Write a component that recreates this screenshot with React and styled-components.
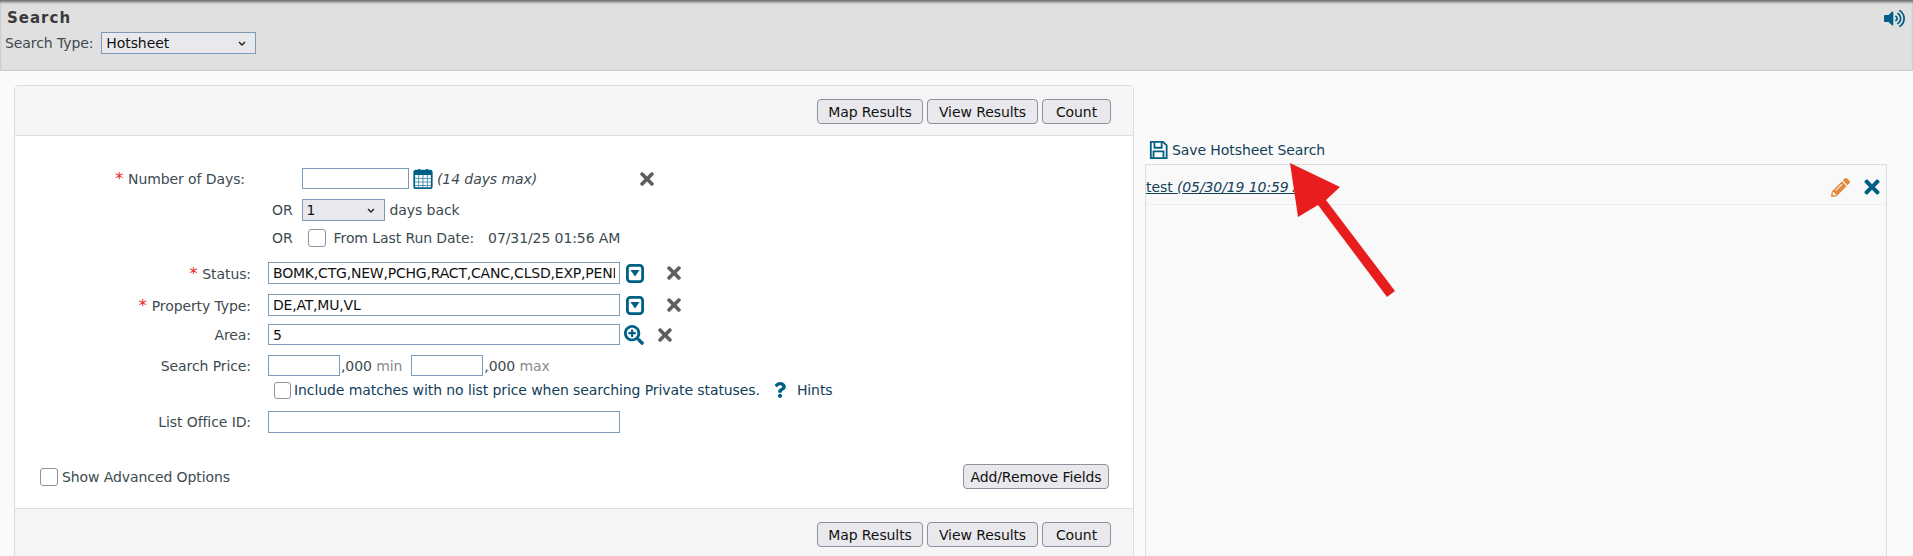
import React from 'react'
import styled, { createGlobalStyle } from 'styled-components'
import { FaTimes, FaVolumeUp, FaPencilAlt, FaQuestion, FaSearchPlus } from 'react-icons/fa'

const FONT = '"DejaVu Sans","Liberation Sans",sans-serif'
const CHEVRON = "url(\"data:image/svg+xml,%3Csvg xmlns='http://www.w3.org/2000/svg' width='8' height='5'%3E%3Cpath d='M1 1l3 3 3-3' fill='none' stroke='%23222' stroke-width='1.4'/%3E%3C/svg%3E\")"

const Global = createGlobalStyle`
  html, body { margin:0; height:100%; overflow:hidden; background:#fafafa; }
  body { font-family:${FONT}; font-size:14px; letter-spacing:-0.09px; color:#3d4a50; }
`

const TopBar = styled.div`
  height:71px;
  box-sizing:border-box;
  background:#e0e0e0;
  border-bottom:1px solid #cbcbcb;
  box-shadow:inset 0 3px 3px -1px rgba(0,0,0,.55);
  padding:9px 8px 0 7px;
  position:relative;
`
const Title = styled.div`
  font-weight:700;
  font-size:15px;
  letter-spacing:1px;
  line-height:18px;
  color:#3a3a3a;
`
const TypeRow = styled.div`
  display:flex;
  align-items:center;
  gap:8px;
  margin:5px 0 0 -2px;
`
const Speaker = styled.div`
  position:absolute;
  top:8px;
  right:8px;
  color:#005f84;
  font-size:21px;
  line-height:21px;
`
const Select = styled.select`
  appearance:none;
  width:${p => p.$w}px;
  height:22px;
  margin-left:${p => p.$ml || 0}px;
  box-sizing:border-box;
  background:#e9e9ed ${CHEVRON} no-repeat right 9px center;
  border:1px solid #7c9bb8;
  color:#111;
  font:14px ${FONT};
  letter-spacing:-0.09px;
  padding:0 0 0 4px;
`
const Main = styled.div`
  display:flex;
  align-items:flex-start;
  padding:14px 0 0 14px;
  gap:11px;
`
const Panel = styled.div`
  width:1120px;
  box-sizing:border-box;
  flex:none;
  background:#fff;
  border:1px solid #dcdcdc;
  border-radius:4px;
`
const ButtonBar = styled.div`
  height:${p => p.$h}px;
  box-sizing:border-box;
  background:#f5f5f5;
  display:flex;
  justify-content:flex-end;
  gap:4px;
  padding:${p => p.$top}px 22px 0 0;
  ${p => p.$bottom ? 'border-top:1px solid #ddd;' : 'border-bottom:1px solid #ddd;'}
`
const Button = styled.button`
  height:25px;
  width:${p => p.$w}px;
  margin-right:${p => p.$mr || 0}px;
  box-sizing:border-box;
  background:#e9e9ed;
  border:1px solid #8f8f9d;
  border-radius:4px;
  padding:0;
  color:#111;
  font:14px ${FONT};
  letter-spacing:-0.09px;
`
const Form = styled.div`
  height:372px;
  box-sizing:border-box;
  padding-top:32px;
`
const Row = styled.div`
  display:flex;
  align-items:center;
  height:${p => p.$h || 22}px;
  margin-top:${p => p.$mt || 0}px;
  padding-left:${p => p.$indent || 0}px;
`
const Label = styled.div`
  width:${p => p.$w || 236}px;
  margin-right:${p => p.$mr || 17}px;
  text-align:right;
  flex:none;
  color:#3d4a50;
`
const Star = styled.span`
  color:#e8231f;
  font-size:16px;
  margin-right:5px;
`
const Input = styled.input`
  width:${p => p.$w}px;
  height:${p => p.$h || 22}px;
  margin-left:${p => p.$ml || 0}px;
  box-sizing:border-box;
  border:1px solid #7c9bb8;
  padding:0 4px;
  color:#111;
  background:#fff;
  font:14px ${FONT};
  letter-spacing:-0.2px;
  outline:none;
`
const Check = styled.input.attrs({ type:'checkbox' })`
  appearance:none;
  width:${p => p.$size || 16}px;
  height:${p => p.$size || 16}px;
  margin:${p => p.$m || 0};
  background:#fff;
  border:1px solid #8f8f9d;
  border-radius:3px;
  flex:none;
`
const Text = styled.span`
  margin-left:${p => p.$ml || 0}px;
  color:${p => p.$color || '#3d4a50'};
  font-style:${p => p.$italic ? 'italic' : 'normal'};
  white-space:nowrap;
`
const Muted = styled.span`
  color:#8a8a8a;
`
const IconSlot = styled.span`
  display:inline-flex;
  align-items:center;
  justify-content:center;
  margin-left:${p => p.$ml || 0}px;
  color:${p => p.$color || '#005f84'};
  font-size:${p => p.$size || 18}px;
`
const Spacer = styled.div`
  flex:1;
`
const Aside = styled.div`
  width:742px;
  flex:none;
  margin-top:54px;
`
const SaveRow = styled.div`
  height:25px;
  box-sizing:border-box;
  display:flex;
  align-items:center;
  padding:0 0 4px 4px;
  color:#124059;
`
const SavedPanel = styled.div`
  height:400px;
  box-sizing:border-box;
  background:#f9f9f9;
  border:1px solid #dcdcdc;
`
const SavedHead = styled.div`
  height:40px;
  box-sizing:border-box;
  border-bottom:1px solid #eee;
  display:flex;
  align-items:center;
  justify-content:space-between;
  padding:5px 3px 0 0;
`
const SavedLink = styled.a`
  color:#124059;
  text-decoration:underline;
  em { font-style:italic; }
`
const Actions = styled.div`
  display:flex;
  align-items:center;
  gap:11px;
`
const Arrow = styled.svg`
  position:absolute;
  left:1280px;
  top:155px;
`

const Calendar = () => (
  <svg width="22" height="21" viewBox="0 0 22 24">
    <rect x="1" y="3" width="20" height="20" rx="2" fill="#fff" stroke="#005f84" strokeWidth="2" />
    <rect x="1" y="3" width="20" height="5" fill="#005f84" />
    <rect x="5" y="1" width="3" height="5" rx="1.5" fill="#005f84" />
    <rect x="14" y="1" width="3" height="5" rx="1.5" fill="#005f84" />
    <path d="M2 12h18M2 16h18M2 20h18M6 8v14M11 8v14M16 8v14" stroke="#5b9ab5" strokeWidth="1.2" />
  </svg>
)

const DropBox = () => (
  <svg width="18" height="19" viewBox="0 0 18 19">
    <rect x="1.4" y="1.4" width="15.2" height="16.2" rx="3" fill="#fff" stroke="#005f84" strokeWidth="2.8" />
    <path d="M4.5 6h9L9 12.5z" fill="#005f84" />
  </svg>
)

const Floppy = () => (
  <svg width="19" height="20" viewBox="0 0 21 21">
    <path d="M2 1.5h13.5l4 4V19.5H2z" fill="#fff" stroke="#005f84" strokeWidth="2" />
    <path d="M6 2v6h8V2" fill="none" stroke="#005f84" strokeWidth="2" />
    <path d="M5 19v-7h11v7" fill="none" stroke="#005f84" strokeWidth="2" />
  </svg>
)

const Clear = ({ ml }) => (
  <IconSlot $ml={ml} $color="#5e5e5e" $size={20}><FaTimes /></IconSlot>
)

const Actionbar = ({ top, h, bottom }) => (
  <ButtonBar $top={top} $h={h} $bottom={bottom}>
    <Button $w={106}>Map Results</Button>
    <Button $w={111}>View Results</Button>
    <Button $w={69}>Count</Button>
  </ButtonBar>
)

export default function App() {
  return (
    <>
      <Global />
      <TopBar>
        <Title>Search</Title>
        <TypeRow>
          <span>Search Type:</span>
          <Select $w={155} defaultValue="Hotsheet"><option>Hotsheet</option></Select>
        </TypeRow>
        <Speaker><FaVolumeUp /></Speaker>
      </TopBar>
      <Main>
        <Panel>
          <Actionbar top={13} h={50} />
          <Form>
            <Row $h={21}>
              <Label $w={230} $mr={57}><Star>*</Star>Number of Days:</Label>
              <Input $w={107} $h={21} />
              <IconSlot $ml={3}><Calendar /></IconSlot>
              <Text $ml={3} $italic>(14 days max)</Text>
              <Clear ml={100} />
            </Row>
            <Row $mt={10} $indent={257}>
              <Text>OR</Text>
              <Select $w={83} $ml={9} defaultValue="1"><option>1</option></Select>
              <Text $ml={5}>days back</Text>
            </Row>
            <Row $mt={7} $h={20} $indent={257}>
              <Text>OR</Text>
              <Check $size={18} $m="0 0 0 15px" />
              <Text $ml={8}>From Last Run Date:</Text>
              <Text $ml={14}>07/31/25 01:56 AM</Text>
            </Row>
            <Row $mt={14}>
              <Label><Star>*</Star>Status:</Label>
              <Input $w={352} defaultValue="BOMK,CTG,NEW,PCHG,RACT,CANC,CLSD,EXP,PENI" />
              <IconSlot $ml={6}><DropBox /></IconSlot>
              <Clear ml={20} />
            </Row>
            <Row $mt={10}>
              <Label><Star>*</Star>Property Type:</Label>
              <Input $w={352} defaultValue="DE,AT,MU,VL" />
              <IconSlot $ml={6}><DropBox /></IconSlot>
              <Clear ml={20} />
            </Row>
            <Row $mt={8} $h={21}>
              <Label>Area:</Label>
              <Input $w={352} $h={21} defaultValue="5" />
              <IconSlot $ml={4} $size={20}><FaSearchPlus /></IconSlot>
              <Clear ml={11} />
            </Row>
            <Row $mt={10} $h={21}>
              <Label>Search Price:</Label>
              <Input $w={72} $h={21} />
              <Text $ml={1}>,000 <Muted>min</Muted></Text>
              <Input $w={72} $h={21} $ml={9} />
              <Text $ml={1}>,000 <Muted>max</Muted></Text>
            </Row>
            <Row $mt={4} $h={20} $indent={259}>
              <Check $size={17} $m="0 3px 0 0" />
              <Text $color="#124059">Include matches with no list price when searching Private statuses.</Text>
              <IconSlot $ml={12} $size={16}><FaQuestion /></IconSlot>
              <Text $ml={9} $color="#124059">Hints</Text>
            </Row>
            <Row $mt={11}>
              <Label>List Office ID:</Label>
              <Input $w={352} />
            </Row>
            <Row $mt={31} $h={25} $indent={25}>
              <Check $size={18} $m="0 4px 0 0" />
              <Text>Show Advanced Options</Text>
              <Spacer />
              <Button $w={146} $mr={24}>Add/Remove Fields</Button>
            </Row>
          </Form>
          <Actionbar top={13} h={60} bottom />
        </Panel>
        <Aside>
          <SaveRow>
            <IconSlot><Floppy /></IconSlot>
            <Text $ml={4} $color="#124059">Save Hotsheet Search</Text>
          </SaveRow>
          <SavedPanel>
            <SavedHead>
              <SavedLink>test <em>(05/30/19 10:59 AM)</em></SavedLink>
              <Actions>
                <IconSlot $color="#e38a3f" $size={19}><FaPencilAlt /></IconSlot>
                <IconSlot $size={22}><FaTimes /></IconSlot>
              </Actions>
            </SavedHead>
          </SavedPanel>
        </Aside>
      </Main>
      <Arrow width="130" height="150" viewBox="0 0 130 150">
        <path d="M10 8L60 32L46 45L115 136L107 142L38 50L18 62z" fill="#e81e1e" />
      </Arrow>
    </>
  )
}
